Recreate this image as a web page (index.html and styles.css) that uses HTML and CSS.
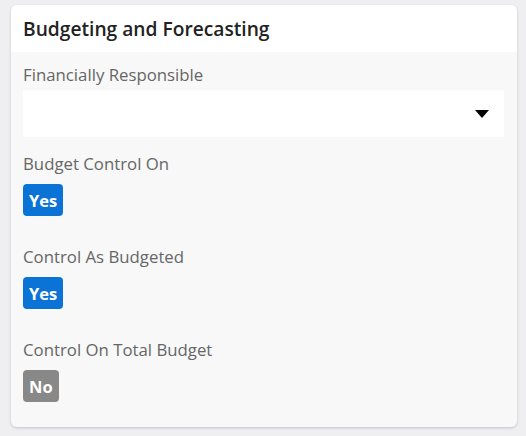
FILE: index.html
```html
<!DOCTYPE html>
<html lang="en">
  <head>
    <meta charset="utf-8" />
    <title>Budgeting and Forecasting</title>
    <link rel="stylesheet" href="styles.css">
  </head>
  <body>
    <div class="card">
      <div class="card-header">
        <h5>Budgeting and Forecasting</h5>
      </div>
      <div class="card-body">
        <div class="field first">
          <label>Financially Responsible</label>
          <div class="select">
            <svg class="caret" width="14" height="8" viewBox="0 0 14 8"><path d="M0 0h14L7 8z" fill="#000"/></svg>
          </div>
        </div>
        <div class="field">
          <label>Budget Control On</label>
          <span class="badge yes">Yes</span>
        </div>
        <div class="field">
          <label>Control As Budgeted</label>
          <span class="badge yes">Yes</span>
        </div>
        <div class="field">
          <label>Control On Total Budget</label>
          <span class="badge no">No</span>
        </div>
      </div>
    </div>
  </body>
</html>
```

FILE: styles.css
```css
body{
  margin: 0;
  padding: 5px 9px 9px 11px;
  background: #efeef1;
  font-family: "Open Sans", sans-serif;
}
.card{
  background: #f8f8f8;
  border-radius: 6px;
  box-shadow: 0 1px 3px rgba(0,0,0,0.18);
  overflow: hidden;
}
.card-header{
  background: #fff;
  height: 47px;
  padding: 0 12px;
  display: flex;
  align-items: center;
}
.card-header h5{
  margin: 0;
  font-size: 19.2px;
  font-weight: 600;
  color: #222;
}
.card-body{
  padding: 13px 13px 25px 12px;
  display: flex;
  flex-direction: column;
  gap: 31px;
}
.field{
  display: flex;
  flex-direction: column;
  align-items: flex-start;
  gap: 10px;
}
.field.first{
  gap: 5px;
  align-items: stretch;
  margin-bottom: -14px;
}
.field label{
  font-size: 16.8px;
  line-height: 20px;
  color: #666;
}
.select{
  background: #fff;
  height: 47px;
  display: flex;
  align-items: center;
  justify-content: flex-end;
  padding-right: 15px;
}
.badge{
  display: inline-flex;
  align-items: center;
  justify-content: center;
  height: 32px;
  padding: 0 6px;
  border-radius: 4px;
  color: #fff;
  font-size: 16.5px;
  font-weight: 700;
}
.badge.yes{
  background: #0b73d6;
}
.badge.no{
  background: #888;
}
```
